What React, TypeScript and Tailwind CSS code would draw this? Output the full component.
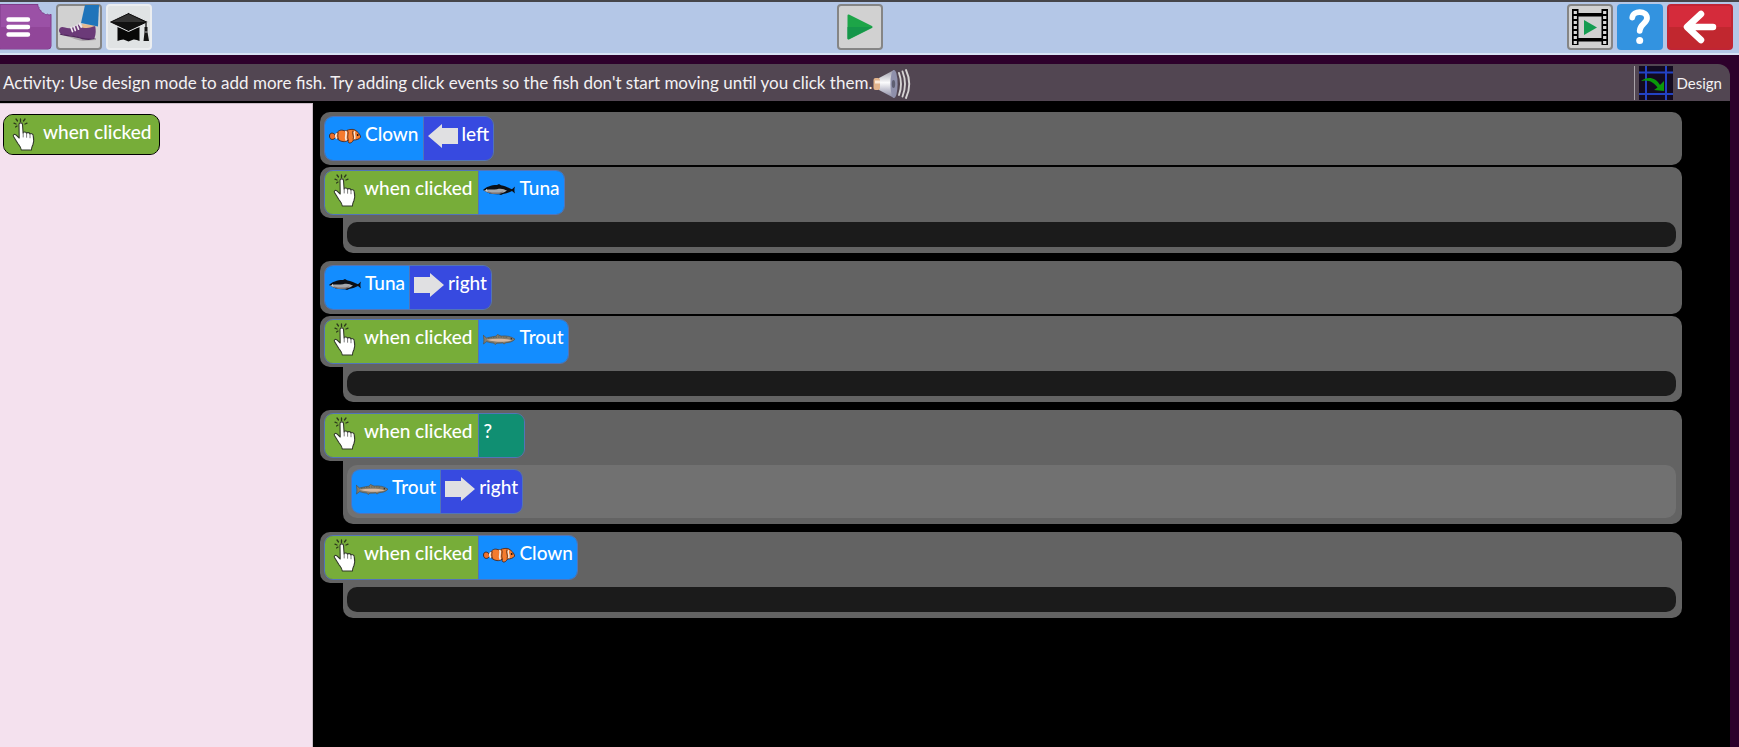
import React from "react";

type Actor = "Clown" | "Tuna" | "Trout";
type Direction = "left" | "right";

const HandIcon = () => (
  <svg width="24" height="34" viewBox="0 0 24 34" aria-hidden="true">
    <g stroke="#2d3a1c" strokeWidth="1.3" strokeLinecap="round">
      <path d="M8.500 3.500V1M5.500 3L4 1M11.500 3L13 1M4 6L2 5.200M13 6L15 5.200M5 8L3.500 9" />
    </g>
    <path
      d="M7 6.500c0-2.200 3.500-2.200 3.500 0l.6 8.500c.4-1.400 3.300-1.200 3.400.4.500-1.200 3.200-1 3.400.7.700-1 3.100-.6 3.300 1.300.6 3.100.9 6.400-.3 9.300-.8 1.700-1.400 2.800-1.500 5.300H9.300c-.3-3-2-4.400-3.600-6.700L1.500 18.500c-.9-1.700 1-2.700 2.400-1.600L7.200 20z"
      fill="#fff"
      stroke="#333b2b"
      strokeWidth="1.100"
      strokeLinejoin="round"
    />
    <path
      d="M11.200 15v4M14.600 15.700v3.600M18 16.800v3"
      stroke="#6d6d6d"
      strokeWidth="0.900"
      strokeLinecap="round"
    />
  </svg>
);

const ClownFish = () => (
  <>
    <path d="M6.500 7.500C4.500 4 .500 4.500.500 8c0 4 4 4.500 6 1.500z" fill="#ee702c" stroke="#35221c" strokeWidth="0.900" />
    <path
      d="M6 8C8 3.500 10.500 1.500 14 2.300c1.500.5 2.200.7 3.500.2C20 1.500 24 .800 26 2c3 2 5 4 5.700 7-1.500 2.300-4.200 3-7.200 3-1 2-2.500 3.300-4.500 3-1.200-.8-.8-2-.7-3-1.500 1.300-3.300 1.800-5.300 1.600-3-.4-5.500-2-8-5.600z"
      fill="#f57b2e"
      stroke="#3c2119"
      strokeWidth="0.800"
    />
    <path d="M7.800 5.300c-1.300 1.700-1.300 3.700 0 5.400" stroke="#f6e9e0" strokeWidth="1.600" fill="none" />
    <path d="M16.500 3c2.300 2.400-1.200 4.700.8 9.500" stroke="#f6e9e0" strokeWidth="1.800" fill="none" />
    <path d="M26 3.200c-2.500 2.300 1.300 4.500-.5 8" stroke="#f6e9e0" strokeWidth="1.500" fill="none" />
    <path d="M18.500 2.600c2 2.400-1 4.700.8 9.700M9.500 4.500c-1 2-.9 4.600.2 7M24 2.500c-1.500 3 1.500 6 0 9" stroke="#35221c" strokeWidth="0.700" fill="none" />
    <circle cx="28.700" cy="7" r="0.900" fill="#1c1010" />
  </>
);

const TunaFish = () => (
  <>
    <path
      d="M0 8c3-3 8-5 14-5l2-1 2 1.200c4 .8 8 2.600 11 4l3-2.700c-.8 2.400-.8 4.600 0 7l-3-2.500c-3 1.500-6 2.500-9 3l-2 1-2-.8C9 12.500 4 11 0 8z"
      fill="#0b0f16"
    />
    <path d="M1 8.700C5 6.700 9 8.200 14 7.200s7 .3 10 1.400c-3 2.200-6 3.200-10 3.200-5.500 0-10-1-13-3.100z" fill="#a5a8ac" />
    <path d="M5 10c4 1.300 11 1.300 15 0" stroke="#7d6f6d" strokeWidth="1.200" fill="none" />
    <circle cx="3.600" cy="7.900" r="0.700" fill="#fff" />
  </>
);

const TroutFish = () => (
  <>
    <path
      d="M0 4l3.500 3C7 6 10 5.700 13 5.200l1.500-1.700 3.500 1.600c5-.6 10 .2 14 3.100-2.500 2.600-5.500 3.400-9 3.500l-2 1.300-1.500-1.100c-2.500.3-4 .2-5.500.3l-2 1.300-1-1.400c-3-.3-5-.8-7.500-1.500L.5 13c.6-3 .5-6-.5-9z"
      fill="#857c6b"
      stroke="#4f5350"
      strokeWidth="0.700"
    />
    <path d="M3.500 8.700C12 7.300 22 7.500 29 9.200c-6 2-16 2.200-25.500-.5z" fill="#d7b9a3" />
    <path d="M5 7.200c7-1.300 14-1.600 20-.8" stroke="#5a6257" strokeWidth="1.100" strokeDasharray="1.500 1" fill="none" />
    <circle cx="28.300" cy="7.700" r="0.700" fill="#222" />
  </>
);

const FishIcon = ({ actor }: { actor: Actor }) => (
  <svg width="32" height="16" viewBox="0 0 32 16" aria-hidden="true">
    {actor === "Clown" && <ClownFish />}
    {actor === "Tuna" && <TunaFish />}
    {actor === "Trout" && <TroutFish />}
  </svg>
);

const ArrowIcon = ({ direction }: { direction: Direction }) => (
  <svg
    width="30"
    height="24"
    viewBox="0 0 30 24"
    aria-hidden="true"
    className={direction === "left" ? "rotate-180" : ""}
  >
    <path d="M0 4h16V0l14 12-14 12v-4H0z" fill="#e0e0e2" />
  </svg>
);

const PlayTriangle = () => (
  <svg width="26" height="26" viewBox="0 0 26 26" aria-hidden="true">
    <path d="M1.500 1.500L24.500 13l-23 11.500z" fill="#1da548" stroke="#1da548" strokeWidth="2" strokeLinejoin="round" />
    <path d="M.5 13h25L1.500 25.300q-1 0-1-1z" fill="#15964a" />
  </svg>
);

const MenuIcon = () => (
  <svg width="52" height="46" viewBox="0 0 52 46" aria-hidden="true">
    <path
      d="M0 .5h38c-.4 1.600.3 2.300 1 3-.3 1.800.7 2.700 2 3 .2 1.900 1.300 2.700 2.800 2.700 1 1.500 2.400 1.800 3.700 1 1.200.9 2.400.9 3.500 0V42q0 3-3 3H0z"
      fill="#9b51a6"
      stroke="#7f3d8a"
    />
    <path d="M0 23h50.500v19q0 2.500-3 2.500H0z" fill="#914699" />
    <path d="M8.500 15.500h19.500M8.500 23h19.500M8.500 30.500h19.500" stroke="#fff" strokeWidth="4.400" strokeLinecap="round" />
  </svg>
);

const ShoeIcon = () => (
  <svg width="42" height="42" viewBox="0 0 42 42" aria-hidden="true" className="overflow-visible">
    <path d="M3 29c8 1 14 5 22 6l13-1v-2z" fill="#a9a4a8" />
    <path d="M24 18l12 1 1 5-12 1z" fill="#e5b98f" />
    <path
      d="M1 25c0-3.500 2.500-5 6-3.500 3 1 6.500 1 9.500-.8l4-2.200c2 2.500 4 3.700 7 3.500 4 .3 7-1.500 9.700-2 .8 4 .8 8-.7 12-4 1.500-9 1.500-13 .5-5-2.700-11-2.500-17-3.500-3-.6-5-1.500-5.500-4z"
      fill="#6b3a78"
    />
    <path d="M2 28c6 2.300 15 1.300 22 4.500 5 1 9 1 12.500 0" stroke="#51275d" strokeWidth="1.300" fill="none" />
    <path d="M13 21.500l1.500 4M16 20.500l1.300 4M19 19.200l1.500 4M21.500 17.500l1.800 3.500" stroke="#eee6ee" strokeWidth="1.700" strokeLinecap="round" />
    <path d="M27-1h14l-1 21.500L23 17z" fill="#1f74ba" />
  </svg>
);

const GradCapIcon = () => (
  <svg width="42" height="40" viewBox="0 0 42 40" aria-hidden="true">
    <path d="M9.500 20q11 4 22 0v14q-3-1.700-6-1.500l-5 2-5-2q-3 .2-6 1.500z" fill="#080808" />
    <path d="M.5 15L20.500 5.500 41 15 20.500 24.500z" fill="#111" stroke="#e8eaec" strokeWidth="1" />
    <path d="M4 15l16.500-8L37 15z" fill="#343434" />
    <path d="M38 16v7" stroke="#111" strokeWidth="1.300" />
    <path d="M36.500 20h3v5l1.500 9h-5.500l1-9z" fill="#151515" />
    <path d="M37 25h2.500" stroke="#ddd" strokeWidth="0.800" />
  </svg>
);

const FilmIcon = () => (
  <svg width="38" height="36" viewBox="0 0 38 36" aria-hidden="true">
    <path d="M1 0h6.500v36H1zM30.500 0H37v36h-6.500zM7 4h24v3.500H7zM7 29h24v3.500H7z" fill="#000" />
    <path d="M4.300 2v33M33.700 2v33" stroke="#d9d9d9" strokeWidth="3.200" strokeDasharray="3 2" />
    <path d="M13 11l13 7.500L13 26z" fill="#149c50" />
  </svg>
);

const QuestionIcon = () => (
  <svg width="24" height="36" viewBox="0 0 24 36" aria-hidden="true">
    <path
      d="M4.300 8.500C5 1 18.800 1.500 19 9c.1 5.300-7.300 6-7.300 12.800"
      fill="none"
      stroke="#fff"
      strokeWidth="5.800"
      strokeLinecap="round"
    />
    <circle cx="11.700" cy="31.500" r="3.500" fill="#fff" />
  </svg>
);

const BackIcon = () => (
  <svg width="34" height="34" viewBox="0 0 34 34" aria-hidden="true">
    <path
      d="M18 4L4 17l14 13M5 17h25"
      fill="none"
      stroke="#fff"
      strokeWidth="6.500"
      strokeLinecap="round"
      strokeLinejoin="round"
    />
  </svg>
);

const SpeakerIcon = () => (
  <svg width="38" height="32" viewBox="0 0 38 32" aria-hidden="true">
    <defs>
      <linearGradient id="cone" x1="0" y1="0" x2="0" y2="1">
        <stop offset="0" stopColor="#9a9aa8" />
        <stop offset="0.450" stopColor="#fbfbfc" />
        <stop offset="1" stopColor="#8585a0" />
      </linearGradient>
    </defs>
    <path d="M6 10L21 2v28L6 22z" fill="url(#cone)" />
    <rect x="0.500" y="10" width="6.500" height="12" rx="2" fill="#e2b48c" />
    <path d="M2 14h5" stroke="#fbe9d6" strokeWidth="3" />
    <ellipse cx="21" cy="16" rx="3.600" ry="14" fill="#8f90ab" />
    <ellipse cx="20.500" cy="16" rx="1.700" ry="4" fill="#5e5f72" />
    <path
      d="M26 5q4 11 0 22M29.500 3.500q5 12.500 0 25M33 2q6.500 14 0 28"
      fill="none"
      stroke="#d5d3d3"
      strokeWidth="1.900"
      strokeLinecap="round"
    />
  </svg>
);

const DesignIcon = () => (
  <svg width="34" height="34" viewBox="0 0 34 34" aria-hidden="true">
    <path d="M0 0h34v34H0z" fill="#130a20" />
    <path d="M7 0v34M27 0v34M0 6.500h34M0 28h34" stroke="#2342c4" strokeWidth="2" />
    <path d="M2 15c6-5 15-4 19 4l4-4v10l-10-1 3.500-2.500C15 16 9 13 2 15z" fill="#0a9a0a" />
  </svg>
);

const TOOL_BUTTON =
  "flex size-[46px] items-center justify-center rounded border-2 border-[#858585] bg-[#d1d1d1]";

const TopBar = () => (
  <header className="flex items-start justify-between border-t-2 border-b-2 border-t-[#45454a] border-b-[#d8e3f5] bg-[#b4c7e7] pt-0.5 pr-1.5 pb-[3px]">
    <div className="flex gap-1">
      <button type="button" aria-label="Menu">
        <MenuIcon />
      </button>
      <button type="button" aria-label="Step" className={TOOL_BUTTON}>
        <ShoeIcon />
      </button>
      <button
        type="button"
        aria-label="Tutorials"
        className="flex size-[46px] items-center justify-center rounded border-2 border-[#eceef0] bg-[#e0e3e4]"
      >
        <GradCapIcon />
      </button>
    </div>
    <button type="button" aria-label="Play" className={TOOL_BUTTON}>
      <PlayTriangle />
    </button>
    <div className="flex gap-1">
      <button type="button" aria-label="Film" className={TOOL_BUTTON}>
        <FilmIcon />
      </button>
      <button
        type="button"
        aria-label="Help"
        className="flex size-[46px] items-center justify-center rounded bg-[#3393e0]"
      >
        <QuestionIcon />
      </button>
      <button
        type="button"
        aria-label="Back"
        className="flex h-[46px] w-[66px] items-center justify-center rounded border-2 border-[#c02534] bg-linear-to-b from-[#d52b3b] from-50% to-[#c1272f] to-50%"
      >
        <BackIcon />
      </button>
    </div>
  </header>
);

const ActivityBar = () => (
  <div className="mr-[9px] flex h-[37px] items-center justify-between rounded-tr-xl bg-[#524652] text-[17px] text-[#f3f1f3]">
    <p className="flex items-center gap-px pl-[3px]">
      Activity: Use design mode to add more fish. Try adding click events so
      the fish don't start moving until you click them.
      <button type="button" aria-label="Read aloud" className="pt-0.5">
        <SpeakerIcon />
      </button>
    </p>
    <button
      type="button"
      className="flex items-center gap-1 border-l border-[#a9a2a9] pr-2 pl-1 text-[15px]"
    >
      <DesignIcon />
      Design
    </button>
  </div>
);

const TILE = "flex h-full items-start gap-1 border-r border-[#5274b8] pr-1 last:border-r-0";

const WhenClicked = () => (
  <span className={`${TILE} bg-[#77ad39] pl-2`}>
    <span className="pt-[3px]">
      <HandIcon />
    </span>
    <span className="px-[3px] pt-[5px] pr-0.5">when clicked</span>
  </span>
);

const ActorTile = ({ actor }: { actor: Actor }) => (
  <span className={`${TILE} bg-[#138dff] pl-1`}>
    <span className="pt-[11px]">
      <FishIcon actor={actor} />
    </span>
    <span className="pt-[5px]">{actor}</span>
  </span>
);

const DirectionTile = ({ direction }: { direction: Direction }) => (
  <span className={`${TILE} bg-[#374ae0] pl-1`}>
    <span className="pt-[7px]">
      <ArrowIcon direction={direction} />
    </span>
    <span className="pt-[5px]">{direction}</span>
  </span>
);

const EmptyTile = () => (
  <span className={`${TILE} w-[45px] bg-[#108f72] pt-[5px] pl-1`}>?</span>
);

const Phrase = ({ children }: { children: React.ReactNode }) => (
  <button
    type="button"
    className="flex h-[45px] overflow-hidden rounded-[9px] border border-[#5274b8] text-left"
  >
    {children}
  </button>
);

const Line = ({ children }: { children: React.ReactNode }) => (
  <div className="flex rounded-[10px] bg-[#636363] p-1">
    <Phrase>{children}</Phrase>
  </div>
);

type EventProps = { trigger: React.ReactNode; children?: React.ReactNode };

const EventBlock = ({ trigger, children }: EventProps) => (
  <div className="mt-0.5 mb-2">
    <div className="flex rounded-t-[10px] rounded-bl-[10px] bg-[#636363] px-1 py-[3px]">
      <Phrase>{trigger}</Phrase>
    </div>
    <div className="ml-[23px] rounded-b-[10px] bg-[#636363] pt-1 pr-1.5 pb-1.5 pl-1">
      {children ? (
        <div className="flex rounded-[10px] bg-[#717171] p-1">
          <Phrase>{children}</Phrase>
        </div>
      ) : (
        <div className="h-[25px] rounded-[10px] bg-[#1b1b1b]" />
      )}
    </div>
  </div>
);

const App = () => (
  <div className="flex min-h-screen flex-col bg-[#2d002b] font-['Lato',sans-serif] text-[19px] leading-6 text-white">
    <TopBar />
    <div className="h-[9px]" />
    <ActivityBar />
    <div className="mr-[9px] flex grow bg-black">
      <aside className="mt-0.5 w-[313px] shrink-0 border-t border-r border-[#cbbcc7] bg-[#f4e1ee] pt-2.5 pl-[3px]">
        <button
          type="button"
          className="flex h-[41px] overflow-hidden rounded-[10px] border border-black bg-[#77ad39] pr-0.5 text-left font-medium"
        >
          <WhenClicked />
        </button>
      </aside>
      <main className="grow pt-[11px] pr-12 pl-[7px] font-medium">
        <Line>
          <ActorTile actor="Clown" />
          <DirectionTile direction="left" />
        </Line>
        <EventBlock
          trigger={
            <>
              <WhenClicked />
              <ActorTile actor="Tuna" />
            </>
          }
        />
        <Line>
          <ActorTile actor="Tuna" />
          <DirectionTile direction="right" />
        </Line>
        <EventBlock
          trigger={
            <>
              <WhenClicked />
              <ActorTile actor="Trout" />
            </>
          }
        />
        <EventBlock
          trigger={
            <>
              <WhenClicked />
              <EmptyTile />
            </>
          }
        >
          <ActorTile actor="Trout" />
          <DirectionTile direction="right" />
        </EventBlock>
        <EventBlock
          trigger={
            <>
              <WhenClicked />
              <ActorTile actor="Clown" />
            </>
          }
        />
      </main>
    </div>
  </div>
);

export default App;
